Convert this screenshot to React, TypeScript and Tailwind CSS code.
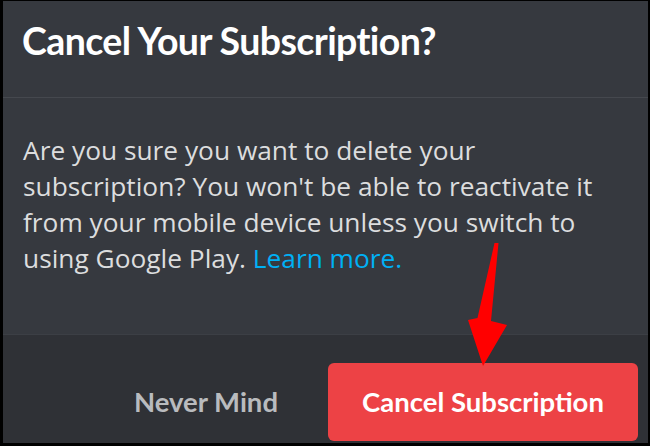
import React from 'react';

// Discord-style "cancel subscription" confirmation modal, with the red callout arrow.
function CalloutArrow() {
  return (
    <svg
      className="absolute left-0 top-0 pointer-events-none"
      width="650"
      height="446"
      viewBox="0 0 650 446"
      aria-hidden="true"
    >
      <polygon
        points="494.5,243 498.5,243 491,321 507,325 483,366 468,320 477.5,318"
        fill="#ff0000"
      />
    </svg>
  );
}

export default function App() {
  return (
    <div
      className="relative w-[650px] h-[446px] bg-black pt-[1px] pl-[3px] pr-[2px] pb-[3px] overflow-hidden"
      style={{ fontFamily: 'Lato, "Open Sans", sans-serif' }}
    >
      <div className="flex flex-col h-full bg-[#36393f]">
        <div className="h-[97px] border-b border-[#45484e] pl-[19px] pt-[14px]">
          <h1 className="text-[37.5px] leading-[52px] font-bold text-white tracking-[-0.6px]">
            Cancel Your Subscription?
          </h1>
        </div>

        <div className="flex-1 pl-[20px] pt-[34px]">
          <p
            className="text-[26.3px] leading-[36px] text-[#dcddde] whitespace-nowrap"
            style={{ fontFamily: '"Open Sans", sans-serif' }}
          >
            Are you sure you want to delete your
            <br />
            subscription? You won't be able to reactivate it
            <br />
            from your mobile device unless you switch to
            <br />
            using Google Play. <span className="text-[#00b0f4]">Learn more.</span>
          </p>
        </div>

        <div className="h-[109px] border-t border-[#3c3f45] bg-[#2f3136] flex items-end justify-end gap-[50px] pr-[10px] pb-[2px]">
          <button
            type="button"
            className="h-[78px] text-[27.5px] font-bold text-[#b9bbbe]"
          >
            <span className="flex h-full items-center">Never Mind</span>
          </button>
          <button
            type="button"
            className="w-[310px] h-[78px] rounded-[6px] bg-[#ed4245] text-white text-[27.5px] font-bold"
          >
            Cancel Subscription
          </button>
        </div>
      </div>
      <CalloutArrow />
    </div>
  );
}
